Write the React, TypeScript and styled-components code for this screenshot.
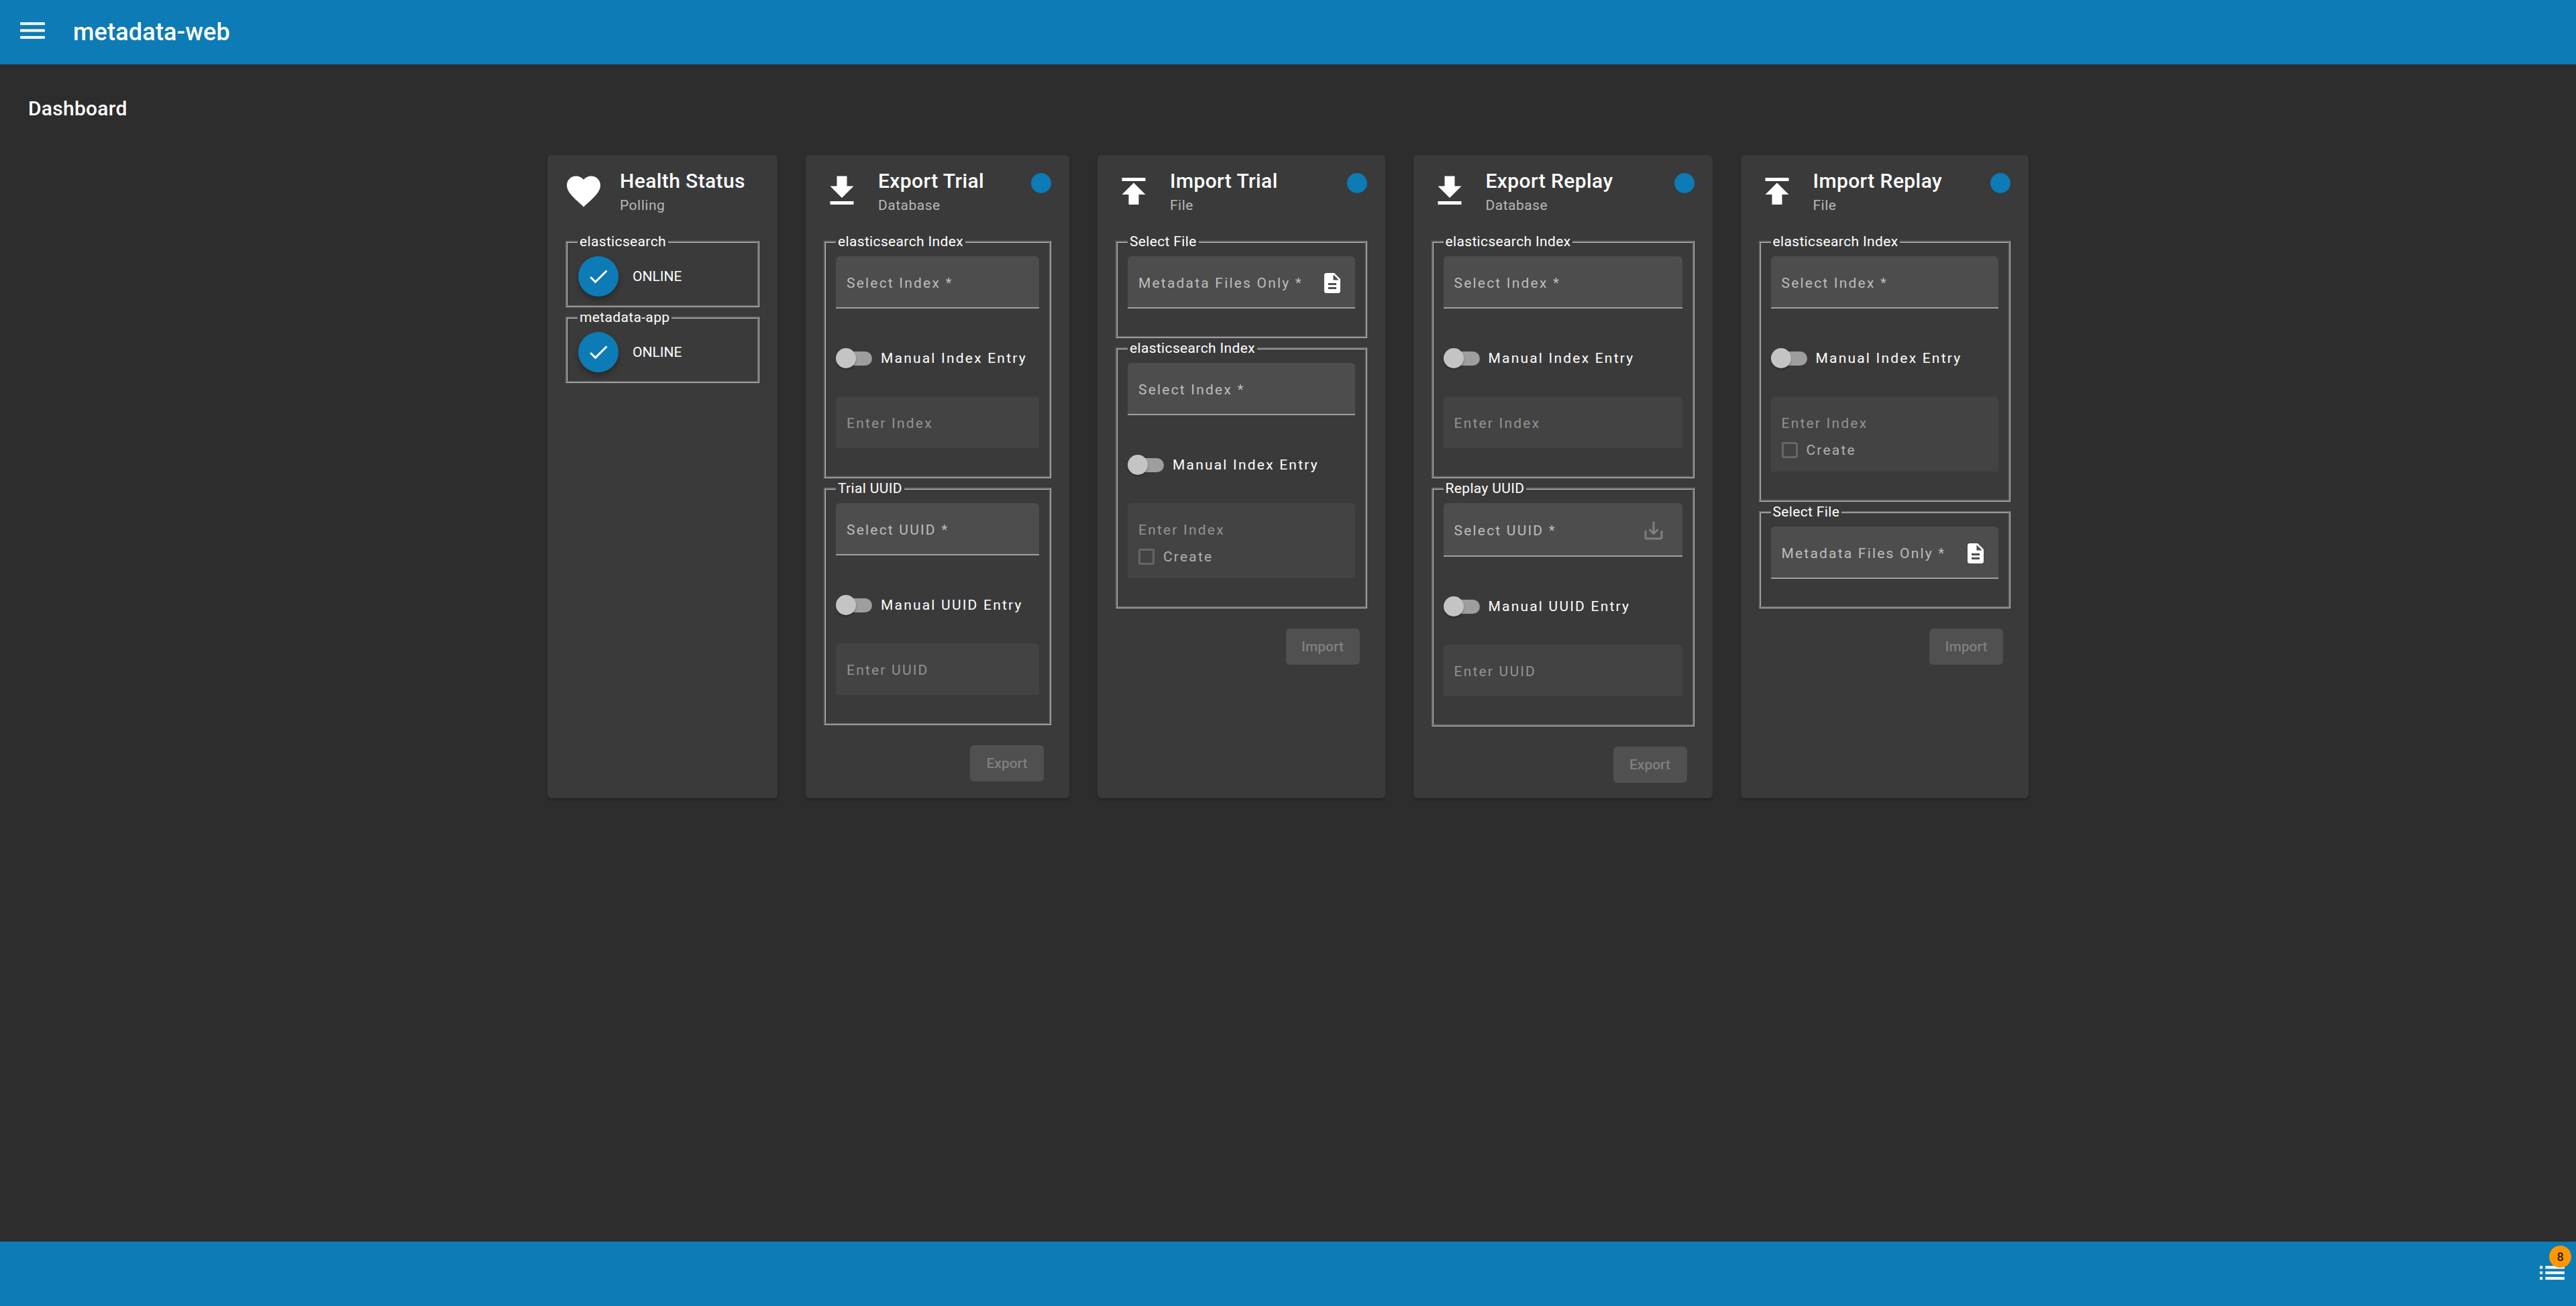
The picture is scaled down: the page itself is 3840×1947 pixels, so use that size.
import React from "react";
import styled, { createGlobalStyle } from "styled-components";

const GlobalStyle = createGlobalStyle`
  html, body {
    margin: 0;
    padding: 0;
    height: 100%;
    background: #2d2d2d;
    font-family: Roboto, "Liberation Sans", sans-serif;
    color: #fff;
  }
  #root {
    height: 100%;
  }
`;

const Page = styled.div`
  display: flex;
  flex-direction: column;
  height: 1947px;
  overflow: hidden;
`;

const AppBar = styled.header`
  box-sizing: border-box;
  display: flex;
  align-items: center;
  flex: none;
  height: 96px;
  padding: 0 0 5px 24px;
  background: #0d7bb5;
`;

const AppTitle = styled.h1`
  margin: 5px 0 0 36px;
  font-size: 36px;
  font-weight: 500;
  line-height: 1;
  letter-spacing: 0.2px;
`;

const Main = styled.main`
  flex: 1;
  padding: 48px 0 0;
`;

const PageTitle = styled.h2`
  margin: 0 0 0 42px;
  font-size: 30px;
  font-weight: 500;
  line-height: 36px;
  letter-spacing: 0.27px;
`;

const CardRow = styled.div`
  display: flex;
  justify-content: center;
  gap: 42px;
  margin-top: 51px;
`;

const Card = styled.section<{ $width: number }>`
  box-sizing: border-box;
  display: flex;
  flex-direction: column;
  width: ${(p) => p.$width}px;
  height: 959px;
  padding: 24px 27px 0;
  border-radius: 6px;
  background: #3a3a3a;
  box-shadow: 0 3px 3px -2px rgba(0, 0, 0, 0.2), 0 3px 4px rgba(0, 0, 0, 0.14);
`;

const CardHeader = styled.div`
  display: flex;
  align-items: flex-start;
  flex: none;
  height: 93px;
  margin-left: -3px;
`;

const HeaderIcon = styled.svg`
  flex: none;
  width: 60px;
  height: 60px;
  margin-right: 24px;
  fill: #fff;
`;

const HeaderText = styled.div`
  flex: 1;
`;

const CardTitle = styled.div`
  font-size: 30px;
  font-weight: 500;
  line-height: 30px;
  letter-spacing: 0.4px;
`;

const CardSub = styled.div`
  margin-top: 6px;
  font-size: 21px;
  line-height: 30px;
  letter-spacing: 0.5px;
  color: #b8b8b8;
`;

const StatusDot = styled.span`
  flex: none;
  width: 30px;
  height: 30px;
  margin-top: 3px;
  border-radius: 50%;
  background: #0d7bb5;
`;

const Group = styled.fieldset<{ $bottom?: number }>`
  box-sizing: border-box;
  flex: none;
  min-width: 0;
  margin: 0 0 3px;
  padding: 9px 15px ${(p) => p.$bottom ?? 42}px;
  border: 3px groove #c0c0c0;
`;

const GroupLabel = styled.legend`
  padding: 0 3px;
  font-size: 21px;
  line-height: 25px;
  letter-spacing: 0.35px;
  color: #fff;
`;

const FilledField = styled.div<{ $icon?: boolean }>`
  box-sizing: border-box;
  display: flex;
  align-items: center;
  justify-content: space-between;
  height: ${(p) => (p.$icon ? 80 : 78)}px;
  padding: 4px 16px 0;
  border-radius: 6px 6px 0 0;
  border-bottom: 2px solid #a0a0a0;
  background: #4d4d4d;
  font-size: 21px;
  letter-spacing: 2.2px;
  color: #bdbdbd;
`;

const FieldIcon = styled.svg<{ $muted?: boolean; $inset: number }>`
  flex: none;
  width: 36px;
  height: 36px;
  margin-right: ${(p) => p.$inset}px;
  fill: ${(p) => (p.$muted ? "#7f7f7f" : "#fff")};
`;

const ToggleRow = styled.div`
  display: flex;
  align-items: center;
  gap: 13px;
  height: 30px;
  margin: 59px 0 42px;
  font-size: 21px;
  letter-spacing: 2.2px;
`;

const Toggle = styled.span`
  flex: none;
  position: relative;
  width: 54px;
  height: 21px;
  border-radius: 11px;
  background: #9e9e9e;

  &::before {
    content: "";
    position: absolute;
    left: 0;
    top: -4.5px;
    width: 30px;
    height: 30px;
    border-radius: 50%;
    background: #c4c4c4;
    box-shadow: 0 2px 3px rgba(0, 0, 0, 0.3);
  }
`;

const DisabledField = styled.div<{ $create?: boolean }>`
  box-sizing: border-box;
  height: ${(p) => (p.$create ? 112 : 77)}px;
  padding: 26px 16px 0;
  border-radius: 6px 6px 0 0;
  background: #434343;
  font-size: 21px;
  line-height: 28px;
  letter-spacing: 2.2px;
  color: #939393;
`;

const CreateRow = styled.div`
  display: flex;
  align-items: center;
  gap: 13px;
  margin-top: 12px;
  color: #b0b0b0;
`;

const CheckBox = styled.span`
  box-sizing: border-box;
  width: 24px;
  height: 24px;
  border: 3px solid #666;
  border-radius: 3px;
`;

const ButtonRow = styled.div`
  display: flex;
  justify-content: flex-end;
  margin: 27px 11px 0 0;
`;

const ActionButton = styled.button`
  width: 110px;
  height: 54px;
  padding: 0;
  border: 0;
  border-radius: 6px;
  background: #505050;
  color: #7f7f7f;
  font-family: inherit;
  font-size: 21px;
  font-weight: 500;
`;

const StatusRow = styled.div`
  display: flex;
  align-items: center;
  gap: 21px;
  height: 60px;
  font-size: 21px;
`;

const CheckCircle = styled.span`
  display: flex;
  align-items: center;
  justify-content: center;
  width: 60px;
  height: 60px;
  margin-left: 1px;
  border-radius: 50%;
  background: #0d7bb5;
  box-shadow: 0 5px 8px rgba(0, 0, 0, 0.3);
`;

const CheckIcon = styled.svg`
  width: 36px;
  height: 36px;
  fill: #fff;
`;

const BottomBar = styled.footer`
  box-sizing: border-box;
  display: flex;
  justify-content: flex-end;
  align-items: center;
  flex: none;
  height: 96px;
  padding: 0 11px 4px 0;
  background: #0d7bb5;
`;

const QueueButton = styled.div`
  position: relative;
  width: 49px;
  height: 49px;
`;

const BarIcon = styled.svg`
  display: block;
  flex: none;
  width: 49px;
  height: 49px;
  fill: #fff;
`;

const Badge = styled.span`
  position: absolute;
  top: -16px;
  right: -4px;
  width: 33px;
  height: 33px;
  border-radius: 50%;
  background: #ff9800;
  color: rgba(0, 0, 0, 0.87);
  font-size: 18px;
  font-weight: 500;
  line-height: 33px;
  text-align: center;
`;

const ICONS = {
  heart:
    "M12 21.35l-1.45-1.32C5.4 15.36 2 12.28 2 8.5 2 5.42 4.42 3 7.5 3c1.74 0 3.41.81 4.5 2.09C13.09 3.81 14.76 3 16.5 3 19.58 3 22 5.42 22 8.5c0 3.78-3.4 6.86-8.55 11.54L12 21.35z",
  download: "M19 9h-4V3H9v6H5l7 7 7-7zM5 18v2h14v-2H5z",
  upload: "M5 4v2h14V4H5zm0 10h4v6h6v-6h4l-7-7-7 7z",
  file: "M14 2H6c-1.1 0-1.99.9-1.99 2L4 20c0 1.1.89 2 1.99 2H18c1.1 0 2-.9 2-2V8l-6-6zm2 16H8v-2h8v2zm0-4H8v-2h8v2zm-3-5V3.5L18.5 9H13z",
  saveAlt:
    "M19 12v7H5v-7H3v7c0 1.1.9 2 2 2h14c1.1 0 2-.9 2-2v-7h-2zm-6 .67l2.59-2.58L17 11.5l-5 5-5-5 1.41-1.41L11 12.67V3h2z",
  check: "M9 16.17L4.83 12l-1.42 1.41L9 19 21 7l-1.41-1.41z",
  menu: "M3 18h18v-2H3v2zm0-5h18v-2H3v2zm0-7v2h18V6H3z",
  list: "M3 13h2v-2H3v2zm0 4h2v-2H3v2zm0-8h2V7H3v2zm4 4h14v-2H7v2zm0 4h14v-2H7v2zM7 7v2h14V7H7z",
};

const Header = ({
  icon,
  title,
  sub,
  dot = true,
}: {
  icon: string;
  title: string;
  sub: string;
  dot?: boolean;
}) => (
  <CardHeader>
    <HeaderIcon viewBox="0 0 24 24">
      <path d={icon} />
    </HeaderIcon>
    <HeaderText>
      <CardTitle>{title}</CardTitle>
      <CardSub>{sub}</CardSub>
    </HeaderText>
    {dot && <StatusDot />}
  </CardHeader>
);

const Status = ({ name }: { name: string }) => (
  <Group $bottom={13}>
    <GroupLabel>{name}</GroupLabel>
    <StatusRow>
      <CheckCircle>
        <CheckIcon viewBox="0 0 24 24">
          <path d={ICONS.check} />
        </CheckIcon>
      </CheckCircle>
      ONLINE
    </StatusRow>
  </Group>
);

const EntryGroup = ({
  legend,
  noun,
  create,
  icon,
}: {
  legend: string;
  noun: string;
  create?: boolean;
  icon?: boolean;
}) => (
  <Group>
    <GroupLabel>{legend}</GroupLabel>
    <FilledField $icon={icon}>
      Select {noun} *
      {icon && (
        <FieldIcon viewBox="0 0 24 24" $muted $inset={9}>
          <path d={ICONS.saveAlt} />
        </FieldIcon>
      )}
    </FilledField>
    <ToggleRow>
      <Toggle />
      Manual {noun} Entry
    </ToggleRow>
    <DisabledField $create={create}>
      Enter {noun}
      {create && (
        <CreateRow>
          <CheckBox />
          Create
        </CreateRow>
      )}
    </DisabledField>
  </Group>
);

const FileGroup = () => (
  <Group $bottom={41}>
    <GroupLabel>Select File</GroupLabel>
    <FilledField>
      Metadata Files Only *
      <FieldIcon viewBox="0 0 24 24" $inset={0}>
        <path d={ICONS.file} />
      </FieldIcon>
    </FilledField>
  </Group>
);

const App = () => (
  <Page>
    <GlobalStyle />
    <AppBar>
      <BarIcon viewBox="0 0 24 24">
        <path d={ICONS.menu} />
      </BarIcon>
      <AppTitle>metadata-web</AppTitle>
    </AppBar>
    <Main>
      <PageTitle>Dashboard</PageTitle>
      <CardRow>
        <Card $width={343}>
          <Header icon={ICONS.heart} title="Health Status" sub="Polling" dot={false} />
          <Status name="elasticsearch" />
          <Status name="metadata-app" />
        </Card>
        <Card $width={393}>
          <Header icon={ICONS.download} title="Export Trial" sub="Database" />
          <EntryGroup legend="elasticsearch Index" noun="Index" />
          <EntryGroup legend="Trial UUID" noun="UUID" />
          <ButtonRow>
            <ActionButton>Export</ActionButton>
          </ButtonRow>
        </Card>
        <Card $width={428.5}>
          <Header icon={ICONS.upload} title="Import Trial" sub="File" />
          <FileGroup />
          <EntryGroup legend="elasticsearch Index" noun="Index" create />
          <ButtonRow>
            <ActionButton>Import</ActionButton>
          </ButtonRow>
        </Card>
        <Card $width={446}>
          <Header icon={ICONS.download} title="Export Replay" sub="Database" />
          <EntryGroup legend="elasticsearch Index" noun="Index" />
          <EntryGroup legend="Replay UUID" noun="UUID" icon />
          <ButtonRow>
            <ActionButton>Export</ActionButton>
          </ButtonRow>
        </Card>
        <Card $width={429.5}>
          <Header icon={ICONS.upload} title="Import Replay" sub="File" />
          <EntryGroup legend="elasticsearch Index" noun="Index" create />
          <FileGroup />
          <ButtonRow>
            <ActionButton>Import</ActionButton>
          </ButtonRow>
        </Card>
      </CardRow>
    </Main>
    <BottomBar>
      <QueueButton>
        <BarIcon viewBox="0 0 24 24">
          <path d={ICONS.list} />
        </BarIcon>
        <Badge>8</Badge>
      </QueueButton>
    </BottomBar>
  </Page>
);

export default App;
